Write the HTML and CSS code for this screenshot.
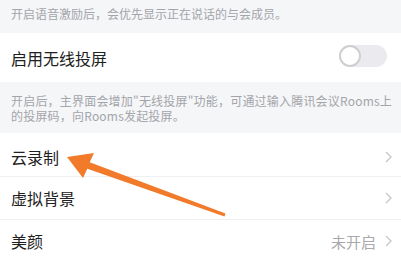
FILE: index.html
```html
<!DOCTYPE html>
<html lang="zh-CN">
<head>
<meta charset="utf-8">
<title>设置</title>
<link rel="stylesheet" href="styles.css">
</head>
<body>
<div class="page">
  <div class="desc desc-top">开启语音激励后，会优先显示正在说话的与会成员。</div>
  <div class="row row-switch">
    <span class="label">启用无线投屏</span>
    <span class="switch"><span class="knob"></span></span>
  </div>
  <div class="desc desc-two">开启后，主界面会增加"无线投屏"功能，可通过输入腾讯会议Rooms上<br>的投屏码，向Rooms发起投屏。</div>
  <div class="row row-rec">
    <span class="label">云录制</span>
    <svg class="chev" viewBox="0 0 7 12" width="7" height="12"><polyline points="1,1 6,6 1,11" fill="none" stroke="#c6c6c8" stroke-width="1.3"/></svg>
  </div>
  <div class="row">
    <span class="label">虚拟背景</span>
    <svg class="chev" viewBox="0 0 7 12" width="7" height="12"><polyline points="1,1 6,6 1,11" fill="none" stroke="#c6c6c8" stroke-width="1.3"/></svg>
  </div>
  <div class="row row-last">
    <span class="label">美颜</span>
    <span class="value">未开启</span>
    <svg class="chev chev-value" viewBox="0 0 7 12" width="7" height="12"><polyline points="1,1 6,6 1,11" fill="none" stroke="#c6c6c8" stroke-width="1.3"/></svg>
  </div>
  <svg class="arrow" viewBox="0 0 401 261" width="401" height="261">
    <polygon points="67,157 94,153 89.7,162.3 225.5,213.6 224.5,216.4 87.3,168.7 83,178" fill="#f27a2b"/>
  </svg>
</div>
</body>
</html>
```

FILE: styles.css
```css
html, body {
  margin: 0;
  padding: 0;
  background: #ffffff;
}
body {
  font-family: "Noto Sans CJK SC", "Noto Sans", sans-serif;
  color: #202020;
  overflow: hidden;
}
.page {
  position: relative;
  width: 401px;
  height: 261px;
  overflow: hidden;
}
.desc {
  background: #f5f6f8;
  color: #a4a5aa;
  font-size: 12px;
  padding-left: 11px;
  padding-right: 6px;
}
.desc-top {
  height: 27px;
  padding-top: 6px;
  line-height: 16px;
}
.desc-two {
  padding-top: 11px;
  padding-bottom: 10px;
  line-height: 15px;
  letter-spacing: 0.2px;
  white-space: nowrap;
}
.row {
  display: flex;
  align-items: center;
  height: 42px;
  padding-left: 11px;
  padding-right: 9px;
  border-bottom: 1px solid #efeff1;
  background: #ffffff;
}
.row-switch {
  height: 49px;
  border-bottom: none;
  padding-right: 14px;
}
.row-rec {
  height: 38px;
  padding-top: 5px;
}
.row-last {
  border-bottom: none;
}
.label {
  font-size: 16px;
  line-height: 22px;
  flex: 1;
}
.value {
  font-size: 15px;
  color: #a9a9ad;
  margin-right: 9px;
}
.chev {
  display: block;
}
.switch {
  display: flex;
  align-items: center;
  width: 48px;
  height: 22px;
  border-radius: 11px;
  background: #ebebef;
  margin-top: -3px;
}
.knob {
  width: 22px;
  height: 22px;
  box-sizing: border-box;
  border-radius: 50%;
  border: 2px solid #cfcfd2;
  background: #ffffff;
}
.arrow {
  position: absolute;
  left: 0;
  top: 0;
  pointer-events: none;
}
```
